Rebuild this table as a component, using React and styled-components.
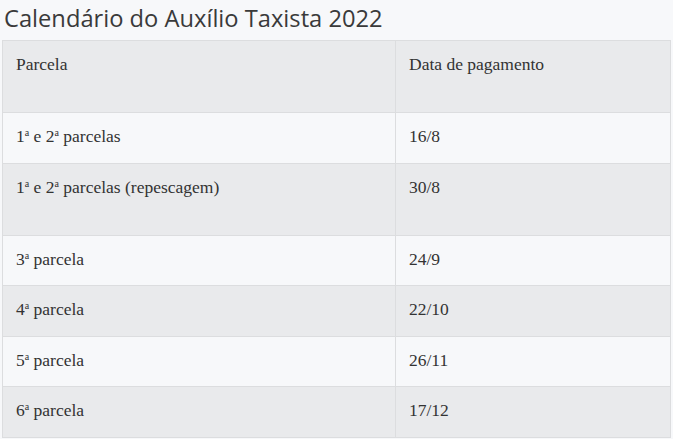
import styled, { createGlobalStyle } from 'styled-components'

const Global = createGlobalStyle`
  body {
    margin: 0;
    background: #f7f8fa;
  }
`;

const Page = styled.div`
  width: 673px;
  height: 439px;
  padding: 0 2px;
  box-sizing: border-box;
  background: #f7f8fa;
  overflow: hidden;
`;

const Title = styled.h2`
  margin: 0;
  padding: 2px 0 0 2px;
  height: 40px;
  box-sizing: border-box;
  font-family: "Open Sans", sans-serif;
  font-weight: 400;
  font-size: 23.7px;
  line-height: 33px;
  color: #3a3a3a;
`;

const Table = styled.table`
  width: 669px;
  border-collapse: collapse;
  font-family: "Liberation Serif", serif;
  font-size: 17.5px;
  color: #333;
`;

const Row = styled.tr`
  background: ${p => (p.$shade ? '#e9eaec' : '#f7f8fa')};
`;

const Cell = styled.td`
  border: 1px solid #dcdddf;
  vertical-align: top;
  padding: 13px 13px 0;
  height: ${p => (p.$tall ? 72 : 50.5)}px;
  box-sizing: border-box;
  line-height: 20px;
  width: ${p => p.$w || 'auto'};
  sup {
    font-size: 10px;
    vertical-align: 6px;
    line-height: 0;
  }
`;

const rows = [
  { p: <>1<sup>a</sup> e 2<sup>a</sup> parcelas</>, d: '16/8' },
  { p: <>1<sup>a</sup> e 2<sup>a</sup> parcelas (repescagem)</>, d: '30/8', tall: true },
  { p: <>3<sup>a</sup> parcela</>, d: '24/9' },
  { p: <>4<sup>a</sup> parcela</>, d: '22/10' },
  { p: <>5<sup>a</sup> parcela</>, d: '26/11' },
  { p: <>6<sup>a</sup> parcela</>, d: '17/12' },
];

export default function App() {
  return (
    <>
      <Global />
      <Page>
        <Title>Calendário do Auxílio Taxista 2022</Title>
        <Table>
          <tbody>
            <Row $shade>
              <Cell $tall $w="393px">Parcela</Cell>
              <Cell $tall>Data de pagamento</Cell>
            </Row>
            {rows.map((r, i) => (
              <Row key={i} $shade={i % 2 === 1}>
                <Cell $tall={r.tall}>{r.p}</Cell>
                <Cell $tall={r.tall}>{r.d}</Cell>
              </Row>
            ))}
          </tbody>
        </Table>
      </Page>
    </>
  )
}
